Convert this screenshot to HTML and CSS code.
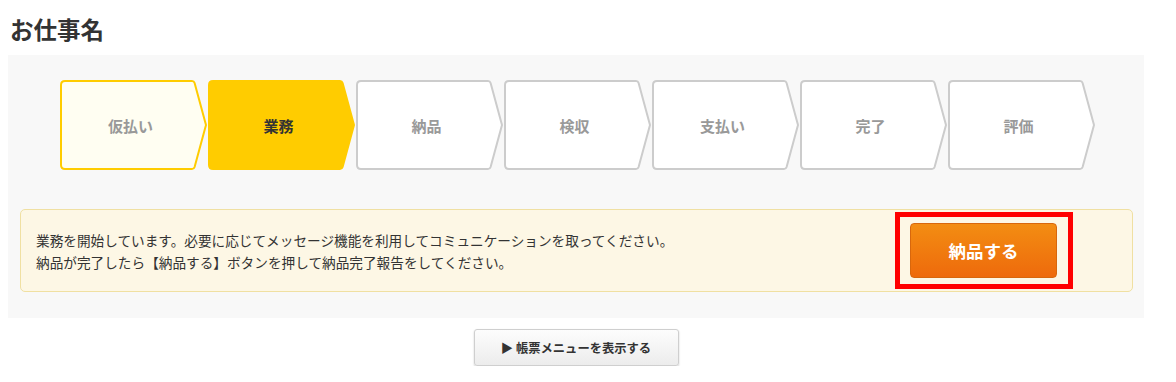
FILE: index.html
```html
<!DOCTYPE html>
<html lang="ja">
<head>
    <meta charset="UTF-8">
    <meta name="viewport" content="width=device-width, initial-scale=1.0">
    <title>お仕事名</title>
    <link rel="stylesheet" href="styles.css">
</head>
<body>
    <div class="wrap">
        <h1 class="job-title">お仕事名</h1>

        <div class="progress-panel">
            <ol class="steps">
                <li class="step step-done">
                    <svg viewBox="0 0 147 90" width="147" height="90"><path d="M5 1 H132 Q134 1 134.6 3 L146 45 L134.6 87 Q134 89 132 89 H5 Q1 89 1 85 V5 Q1 1 5 1 Z"/></svg>
                    <span>仮払い</span>
                </li>
                <li class="step step-current">
                    <svg viewBox="0 0 147 90" width="147" height="90"><path d="M5 1 H132 Q134 1 134.6 3 L146 45 L134.6 87 Q134 89 132 89 H5 Q1 89 1 85 V5 Q1 1 5 1 Z"/></svg>
                    <span>業務</span>
                </li>
                <li class="step">
                    <svg viewBox="0 0 147 90" width="147" height="90"><path d="M5 1 H132 Q134 1 134.6 3 L146 45 L134.6 87 Q134 89 132 89 H5 Q1 89 1 85 V5 Q1 1 5 1 Z"/></svg>
                    <span>納品</span>
                </li>
                <li class="step">
                    <svg viewBox="0 0 147 90" width="147" height="90"><path d="M5 1 H132 Q134 1 134.6 3 L146 45 L134.6 87 Q134 89 132 89 H5 Q1 89 1 85 V5 Q1 1 5 1 Z"/></svg>
                    <span>検収</span>
                </li>
                <li class="step">
                    <svg viewBox="0 0 147 90" width="147" height="90"><path d="M5 1 H132 Q134 1 134.6 3 L146 45 L134.6 87 Q134 89 132 89 H5 Q1 89 1 85 V5 Q1 1 5 1 Z"/></svg>
                    <span>支払い</span>
                </li>
                <li class="step">
                    <svg viewBox="0 0 147 90" width="147" height="90"><path d="M5 1 H132 Q134 1 134.6 3 L146 45 L134.6 87 Q134 89 132 89 H5 Q1 89 1 85 V5 Q1 1 5 1 Z"/></svg>
                    <span>完了</span>
                </li>
                <li class="step">
                    <svg viewBox="0 0 147 90" width="147" height="90"><path d="M5 1 H132 Q134 1 134.6 3 L146 45 L134.6 87 Q134 89 132 89 H5 Q1 89 1 85 V5 Q1 1 5 1 Z"/></svg>
                    <span>評価</span>
                </li>
            </ol>

            <div class="notice">
                <p class="notice-text">
                    業務を開始しています。必要に応じてメッセージ機能を利用してコミュニケーションを取ってください。<br>
                    納品が完了したら【納品する】ボタンを押して納品完了報告をしてください。
                </p>
                <div class="highlight">
                    <button type="button" class="deliver-button">納品する</button>
                </div>
            </div>
        </div>

        <button type="button" class="menu-button">▶ 帳票メニューを表示する</button>
    </div>
</body>
</html>
```

FILE: styles.css
```css
body {
    margin: 0 8px;
    font-family: "Noto Sans CJK JP", "Noto Sans", sans-serif;
    color: #333;
    background-color: #fff;
}
.wrap {
    width: 1136px;
}
.job-title {
    margin: 14px 0 11px 2px;
    font-size: 23.5px;
    line-height: 30px;
    font-weight: bold;
    color: #333;
}
.progress-panel {
    background-color: #f8f8f8;
    padding: 25px 11px 26px 12px;
}
.steps {
    display: flex;
    justify-content: center;
    gap: 1px;
    list-style: none;
    margin: 0 0 39px 0;
    padding: 0 0 0 1px;
}
.step {
    display: grid;
    width: 147px;
    height: 90px;
}
.step svg,
.step span {
    grid-area: 1 / 1;
}
.step svg path {
    fill: #fff;
    stroke: #ccc;
    stroke-width: 2;
    stroke-linejoin: round;
}
.step span {
    display: flex;
    align-items: center;
    justify-content: center;
    padding-right: 5px;
    font-size: 15px;
    font-weight: bold;
    color: #999;
}
.step-done svg path {
    fill: #fffef2;
    stroke: #ffcc00;
}
.step-current svg path {
    fill: #ffcc00;
    stroke: #ffcc00;
}
.step-current span {
    color: #333;
}
.notice {
    display: flex;
    justify-content: space-between;
    align-items: center;
    background-color: #fdf7e5;
    border: 1px solid #f0e0a2;
    border-radius: 5px;
    padding: 2px 59px 2px 15px;
}
.notice-text {
    margin: 0;
    font-size: 13.65px;
    line-height: 22px;
    color: #333;
}
.highlight {
    border: 5px solid #ff0000;
    padding: 6px 11px 6px 10px;
}
.deliver-button {
    display: block;
    width: 147px;
    height: 55px;
    border: 1px solid #d8670c;
    border-radius: 4px;
    background: linear-gradient(#f38d12, #ee6a0c);
    color: #fff;
    font-family: inherit;
    font-size: 17.5px;
    font-weight: bold;
    cursor: pointer;
}
.menu-button {
    display: block;
    width: 205px;
    height: 37px;
    margin: 11px auto 0;
    border: 1px solid #cfcfcf;
    border-radius: 3px;
    background: linear-gradient(#fdfdfd, #ececec);
    box-shadow: 0 1px 2px rgba(0, 0, 0, 0.2);
    color: #333;
    font-family: inherit;
    font-size: 12.3px;
    font-weight: bold;
    cursor: pointer;
}
```
